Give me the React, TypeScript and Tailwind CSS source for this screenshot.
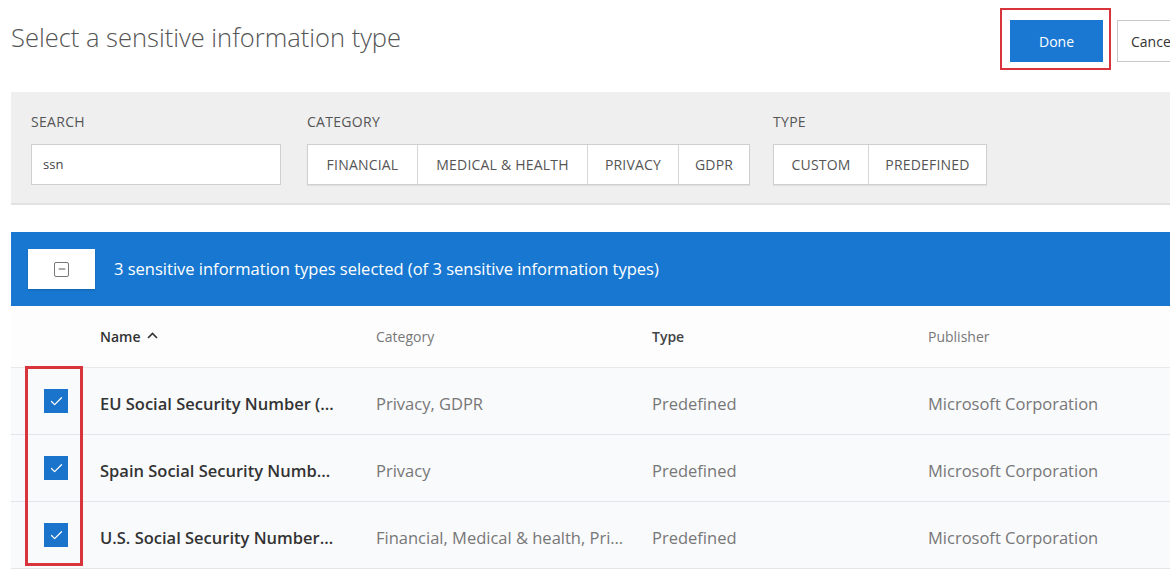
import { Check, Minus } from "lucide-react";

const categories = [
  { label: "FINANCIAL", w: "w-[109px]" },
  { label: "MEDICAL & HEALTH", w: "w-[170px]" },
  { label: "PRIVACY", w: "w-[91px]" },
  { label: "GDPR", w: "w-[71px]" },
];

const types = [
  { label: "CUSTOM", w: "w-[94px]" },
  { label: "PREDEFINED", w: "w-[118px]" },
];

const rows = [
  {
    name: "EU Social Security Number (…",
    category: "Privacy, GDPR",
    type: "Predefined",
    publisher: "Microsoft Corporation",
  },
  {
    name: "Spain Social Security Numb…",
    category: "Privacy",
    type: "Predefined",
    publisher: "Microsoft Corporation",
  },
  {
    name: "U.S. Social Security Number…",
    category: "Financial, Medical & health, Pri…",
    type: "Predefined",
    publisher: "Microsoft Corporation",
  },
];

function FilterGroup({ items }: { items: { label: string; w: string }[] }) {
  return (
    <div className="flex h-[41px] border border-[#cfcfcf] bg-white shadow-[0_1px_1px_rgba(0,0,0,0.06)]">
      {items.map((it, i) => (
        <div
          key={it.label}
          className={`${it.w} flex items-center justify-center text-[14px] tracking-[0.2px] text-[#555] ${
            i > 0 ? "border-l border-[#d6d6d6]" : ""
          }`}
        >
          {it.label}
        </div>
      ))}
    </div>
  );
}

export default function App() {
  return (
    <div className="relative w-[1170px] h-[576px] overflow-hidden bg-white font-['Open_Sans',sans-serif]">
      {/* Header */}
      <div className="flex h-[92px] pl-[11px]">
        <div className="w-[989px] shrink-0">
          <h1 className="mt-[19px] text-[25.5px] leading-[36px] font-light text-[#555]">
            Select a sensitive information type
          </h1>
        </div>
        <div className="flex items-start pt-[8px] shrink-0">
          <div className="border-2 border-[#d8343c] pt-[10px] pl-[8px] pr-[6px] pb-[6px]">
            <button className="w-[93px] h-[42px] bg-[#1a78d2] text-white text-[14px]">
              Done
            </button>
          </div>
          <button className="ml-[6px] mt-[12px] w-[90px] h-[42px] border border-[#c8c8c8] bg-white text-[14px] text-[#333] text-left pl-[13px] shrink-0">
            Cancel
          </button>
        </div>
      </div>

      {/* Filters */}
      <div className="ml-[11px] h-[113px] bg-[#efefef] border-b-2 border-[#e2e2e2] pl-[20px] pt-[21px] flex gap-[26px]">
        <div>
          <div className="h-[18px] leading-[18px] text-[14px] tracking-[0.3px] text-[#555]">SEARCH</div>
          <div className="mt-[13px] w-[250px] h-[41px] bg-white border border-[#cfcfcf] flex items-center pl-[11px] text-[13px] text-[#444]">
            ssn
          </div>
        </div>
        <div>
          <div className="h-[18px] leading-[18px] text-[14px] tracking-[0.3px] text-[#555]">CATEGORY</div>
          <div className="mt-[13px]">
            <FilterGroup items={categories} />
          </div>
        </div>
        <div className="ml-[-3px]">
          <div className="h-[18px] leading-[18px] text-[14px] tracking-[0.3px] text-[#555]">TYPE</div>
          <div className="mt-[13px]">
            <FilterGroup items={types} />
          </div>
        </div>
      </div>

      {/* Selection bar */}
      <div className="ml-[11px] mt-[27px] h-[74px] bg-[#1878d1] flex items-center pl-[17px]">
        <div className="w-[67px] h-[40px] bg-white flex items-center justify-center shadow-[0_1px_2px_rgba(0,0,0,0.2)]">
          <div className="w-[15px] h-[15px] border border-[#777] rounded-[2px] flex items-center justify-center">
            <Minus className="w-[10px] h-[10px] text-[#555]" strokeWidth={2.5} />
          </div>
        </div>
        <span className="ml-[19px] text-[16.5px] text-white">
          3 sensitive information types selected (of 3 sensitive information types)
        </span>
      </div>

      {/* Table header */}
      <div className="ml-[11px] h-[62px] bg-[#fdfdfe] border-b border-[#e6e8eb] flex items-center text-[14px]">
        <div className="w-[89px]" />
        <div className="w-[276px] flex items-center gap-[6px] font-semibold text-[#333]">
          Name
          <svg width="11" height="7" viewBox="0 0 11 7" className="mt-[-2px]">
            <path d="M1 6 L5.5 1.5 L10 6" fill="none" stroke="#333" strokeWidth="1.6" />
          </svg>
        </div>
        <div className="w-[276px] text-[#777]">Category</div>
        <div className="w-[276px] font-semibold text-[#444]">Type</div>
        <div className="text-[#777]">Publisher</div>
      </div>

      {/* Rows */}
      {rows.map((r) => (
        <div
          key={r.name}
          className="ml-[11px] h-[67px] bg-[#f9fafc] border-b border-[#e3e5e8] flex items-center text-[16.5px] whitespace-nowrap"
        >
          <div className="w-[89px] pl-[33px]">
            <div className="w-[24px] h-[24px] bg-[#1a74cc] flex items-center justify-center">
              <Check className="w-[15px] h-[15px] text-white" strokeWidth={2} />
            </div>
          </div>
          <div className="w-[276px] font-semibold text-[#333] pt-[6px]">{r.name}</div>
          <div className="w-[276px] text-[#777] pt-[6px]">{r.category}</div>
          <div className="w-[276px] text-[#777] pt-[6px]">{r.type}</div>
          <div className="text-[#777] pt-[6px]">{r.publisher}</div>
        </div>
      ))}

      {/* Annotation around checkboxes */}
      <div className="absolute left-[25px] top-[366px] w-[58px] h-[200px] border-[3px] border-[#d8343c] pointer-events-none" />
    </div>
  );
}
